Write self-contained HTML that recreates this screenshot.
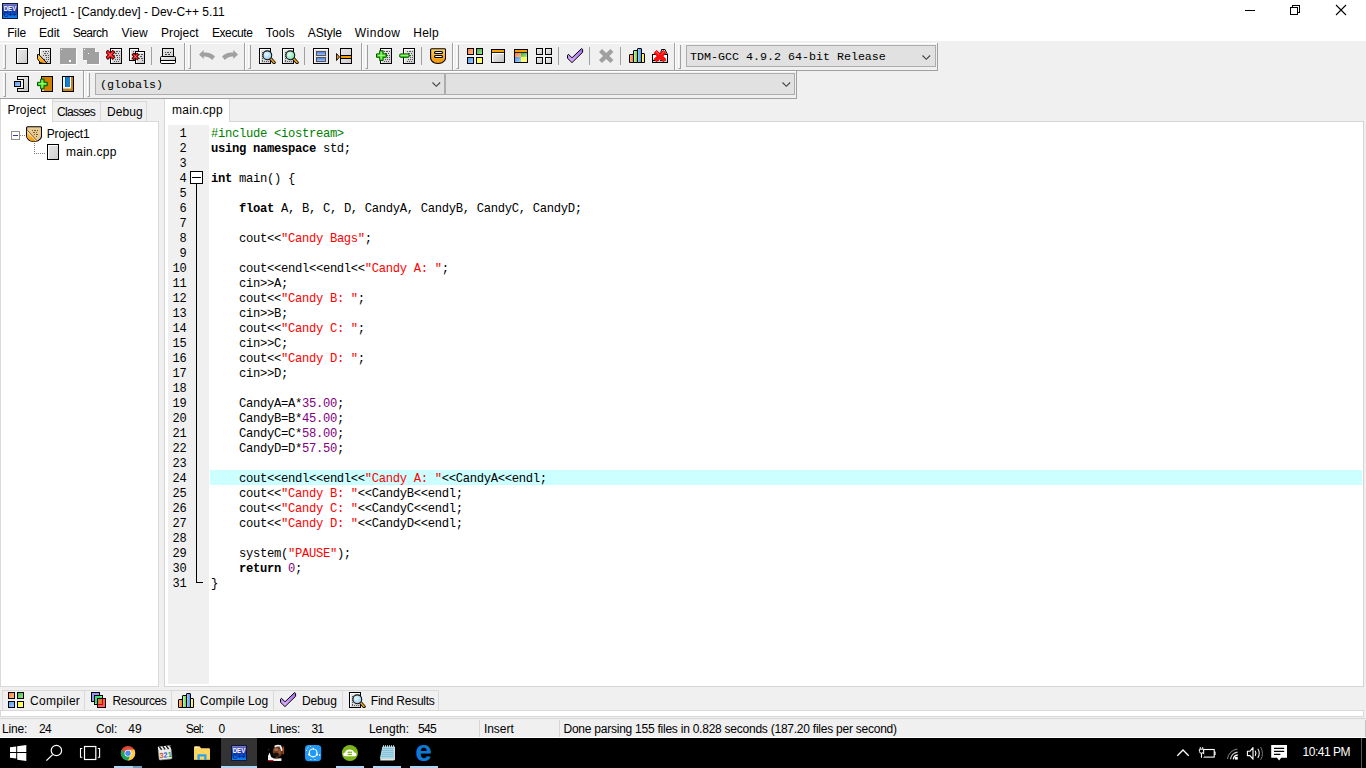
<!DOCTYPE html><html lang="en"><head><meta charset="utf-8"><title>Project1 - [Candy.dev] - Dev-C++ 5.11</title><style>
*{box-sizing:border-box;margin:0;padding:0}
html,body{width:1366px;height:768px;overflow:hidden;background:#f0f0f0}
body{position:relative;font-family:"Liberation Sans", "DejaVu Sans", sans-serif;font-size:12px;color:#000;-webkit-font-smoothing:antialiased}
.abs{position:absolute}
.t{position:absolute;white-space:pre;line-height:16px;height:16px}
#title{left:0;top:0;width:1366px;height:23px;background:#fff}
#menu{left:0;top:23px;width:1366px;height:18px;background:#fff}
.vl{position:absolute;width:1px;background:#a0a0a0}
.vw{position:absolute;width:1px;background:#fff}
.hl{position:absolute;height:1px;background:#a0a0a0}
.hw{position:absolute;height:1px;background:#fff}
.grip{position:absolute;width:3px;height:24px;border-left:1px solid #fcfcfc;border-right:1px solid #a0a0a0;border-bottom:1px solid #a0a0a0}
.sep{position:absolute;width:1px;height:18px;background:#a0a0a0;top:47px}
.combo{position:absolute;background:#e1e1e1;border:1px solid #adadad;font-family:"Liberation Mono", "DejaVu Sans Mono", monospace}
.ic{position:absolute;width:16px;height:16px;overflow:visible}
.tab{position:absolute;background:#f0f0f0;border:1px solid #d9d9d9}
.code{position:absolute;left:211px;white-space:pre;font-family:"Liberation Mono", "DejaVu Sans Mono", monospace;font-size:12.2px;letter-spacing:-0.321px;line-height:15px;height:15px;color:#000}
.ln{position:absolute;left:166px;width:20.5px;text-align:right;white-space:pre;font-family:"Liberation Mono", "DejaVu Sans Mono", monospace;font-size:12px;letter-spacing:-0.2px;line-height:15px;height:15px;color:#000}
.k{font-weight:bold}
.p{color:#008000}
.s{color:#ff0000}
.n{color:#800080}
</style></head><body>
<div id="title" class="abs"></div>
<div class="t" style="left:23.5px;top:4px;letter-spacing:-0.03px;">Project1 - [Candy.dev] - Dev-C++ 5.11</div>
<svg class="abs" style="left:1240px;top:0" width="126" height="23" viewBox="0 0 126 23"><g fill="none" stroke="#000" stroke-width="1" shape-rendering="crispEdges"><path d="M5 10.5h10"/><path d="M50.5 7.5h7v7h-7z"/><path d="M52.5 7.5v-2h7v7h-2"/></g><path d="M96 5l10 10M106 5l-10 10" stroke="#000" stroke-width="1.1" fill="none"/></svg>
<div id="menu" class="abs"></div>
<div class="t" style="left:7.2px;top:25px;letter-spacing:-0.15px;">File</div>
<div class="t" style="left:39.1px;top:25px;letter-spacing:-0.03px;">Edit</div>
<div class="t" style="left:72.7px;top:25px;letter-spacing:-0.51px;">Search</div>
<div class="t" style="left:121.5px;top:25px;letter-spacing:0.10px;">View</div>
<div class="t" style="left:161.1px;top:25px;letter-spacing:0.02px;">Project</div>
<div class="t" style="left:211.9px;top:25px;letter-spacing:-0.39px;">Execute</div>
<div class="t" style="left:265.7px;top:25px;letter-spacing:0.22px;">Tools</div>
<div class="t" style="left:307.8px;top:25px;letter-spacing:-0.10px;">AStyle</div>
<div class="t" style="left:354.8px;top:25px;letter-spacing:0.50px;">Window</div>
<div class="t" style="left:413.3px;top:25px;letter-spacing:0.24px;">Help</div>
<svg width="0" height="0" style="position:absolute"><defs>
<linearGradient id="gPage" x1="0" y1="0" x2="1" y2="1"><stop offset="0" stop-color="#e6e6e6"/><stop offset="0.5" stop-color="#dcdcdc"/><stop offset="1" stop-color="#cccccc"/></linearGradient>
<linearGradient id="gOr" x1="0" y1="0" x2="0" y2="1"><stop offset="0" stop-color="#ffd060"/><stop offset="1" stop-color="#f79000"/></linearGradient>
<linearGradient id="gO2" x1="0" y1="0" x2="1" y2="1"><stop offset="0" stop-color="#ff7a30"/><stop offset="1" stop-color="#ffc090"/></linearGradient>
<linearGradient id="gG2" x1="0" y1="0" x2="1" y2="1"><stop offset="0" stop-color="#38ac38"/><stop offset="1" stop-color="#a8ea9a"/></linearGradient>
<linearGradient id="gB2" x1="0" y1="0" x2="1" y2="1"><stop offset="0" stop-color="#4a98f0"/><stop offset="1" stop-color="#a8d0ff"/></linearGradient>
<linearGradient id="gY2" x1="0" y1="0" x2="1" y2="1"><stop offset="0" stop-color="#ffff30"/><stop offset="1" stop-color="#ffff90"/></linearGradient>
<linearGradient id="gGr" x1="0" y1="0" x2="1" y2="1"><stop offset="0" stop-color="#f6f6f6"/><stop offset="1" stop-color="#c0c0c0"/></linearGradient>
<linearGradient id="cO" x1="0" y1="0" x2="1" y2="0"><stop offset="0" stop-color="#ffc890"/><stop offset="1" stop-color="#f87820"/></linearGradient>
<linearGradient id="cG" x1="0" y1="0" x2="1" y2="0"><stop offset="0" stop-color="#d8ffb8"/><stop offset="1" stop-color="#58c838"/></linearGradient>
<linearGradient id="cB" x1="0" y1="0" x2="1" y2="0"><stop offset="0" stop-color="#a8d4ff"/><stop offset="1" stop-color="#4090f0"/></linearGradient>
<linearGradient id="cY" x1="0" y1="0" x2="1" y2="0"><stop offset="0" stop-color="#ffffb0"/><stop offset="1" stop-color="#f8e820"/></linearGradient>
<linearGradient id="gBar" x1="0" y1="0" x2="0" y2="1"><stop offset="0" stop-color="#3a78e8"/><stop offset="1" stop-color="#a6c8ff"/></linearGradient>
<linearGradient id="gPur" x1="0" y1="0" x2="0" y2="1"><stop offset="0" stop-color="#a060f0"/><stop offset="1" stop-color="#e0b8ff"/></linearGradient>
<radialGradient id="gLensB" cx="0.4" cy="0.4" r="0.7"><stop offset="0" stop-color="#e8f8ff"/><stop offset="1" stop-color="#8cc8f0"/></radialGradient>
<radialGradient id="gLensG" cx="0.4" cy="0.4" r="0.7"><stop offset="0" stop-color="#e0fff0"/><stop offset="1" stop-color="#70d8a8"/></radialGradient>
<linearGradient id="gDev" x1="0" y1="0" x2="0" y2="1"><stop offset="0" stop-color="#a8a8e0"/><stop offset="0.12" stop-color="#6068c0"/><stop offset="0.45" stop-color="#2030a0"/><stop offset="0.6" stop-color="#0848c8"/><stop offset="1" stop-color="#1090ff"/></linearGradient>
</defs></svg>
<svg class="abs" style="left:2px;top:3px" width="16" height="16" viewBox="0 0 16 16"><rect x="0" y="0" width="16" height="16" fill="url(#gDev)"/><rect x="0.5" y="0.5" width="15" height="15" fill="none" stroke="#101840"/><text x="8" y="7.6" font-family="Liberation Sans, sans-serif" font-weight="bold" font-size="7" fill="#fff" text-anchor="middle" textLength="12.6" lengthAdjust="spacingAndGlyphs">DEV</text><text x="8" y="13.6" font-family="Liberation Sans, sans-serif" font-weight="bold" font-size="7" fill="#062c80" text-anchor="middle" textLength="13" lengthAdjust="spacingAndGlyphs">C++</text></svg>
<svg class="abs" style="left:16px;top:48px" width="12" height="16" viewBox="0 0 12 16" ><rect x="0.5" y="0.5" width="11" height="15" fill="url(#gPage)" stroke="#000" shape-rendering="crispEdges"/><path d="M1.5 14.5V1.5H10.5" fill="none" stroke="#fff" shape-rendering="crispEdges"/></svg>
<svg class="abs" style="left:37px;top:48px" width="14" height="16" viewBox="0 0 14 16" ><rect x="2.5" y="0.5" width="11" height="15" fill="url(#gPage)" stroke="#000" shape-rendering="crispEdges"/><path d="M3.5 14.5V1.5H12.5" fill="none" stroke="#fff" shape-rendering="crispEdges"/><rect x="6" y="3" width="1" height="1" fill="#555" shape-rendering="crispEdges"/><rect x="8" y="3" width="2" height="1" fill="#555" shape-rendering="crispEdges"/><rect x="11" y="3" width="1" height="1" fill="#555" shape-rendering="crispEdges"/><rect x="7" y="5" width="2" height="1" fill="#555" shape-rendering="crispEdges"/><rect x="10" y="5" width="1" height="1" fill="#555" shape-rendering="crispEdges"/><rect x="6" y="7" width="1" height="1" fill="#555" shape-rendering="crispEdges"/><rect x="8" y="7" width="2" height="1" fill="#555" shape-rendering="crispEdges"/><rect x="11" y="7" width="1" height="1" fill="#555" shape-rendering="crispEdges"/><rect x="9" y="9" width="1" height="1" fill="#555" shape-rendering="crispEdges"/><rect x="11" y="9" width="1" height="1" fill="#555" shape-rendering="crispEdges"/><rect x="7" y="11" width="1" height="1" fill="#555" shape-rendering="crispEdges"/><rect x="9" y="11" width="1" height="1" fill="#555" shape-rendering="crispEdges"/><rect x="11" y="11" width="1" height="1" fill="#555" shape-rendering="crispEdges"/><rect x="6" y="13" width="1" height="1" fill="#555" shape-rendering="crispEdges"/><rect x="8" y="13" width="1" height="1" fill="#555" shape-rendering="crispEdges"/><rect x="10" y="13" width="1" height="1" fill="#555" shape-rendering="crispEdges"/><path d="M0.5 6.5H1.8L10.5 15.5H6L3.5 14.5L1.5 12.5L0.5 10.5Z" fill="url(#gOr)" stroke="#000" stroke-linejoin="round"/></svg>
<svg class="abs" style="left:60px;top:48px" width="17" height="17" viewBox="0 0 17 17" ><rect x="1" y="1" width="16" height="16" fill="#fff" shape-rendering="crispEdges"/><rect x="0" y="0" width="16" height="16" fill="#a0a0a0" shape-rendering="crispEdges"/><rect x="1" y="1" width="1" height="1" fill="#fff" shape-rendering="crispEdges"/><rect x="9" y="12" width="2" height="2" fill="#fff" shape-rendering="crispEdges"/></svg>
<svg class="abs" style="left:83px;top:48px" width="17" height="17" viewBox="0 0 17 17" ><path d="M1 1h12v4h4v12h-12v-4h-4z" fill="#fff" shape-rendering="crispEdges"/><path d="M0 0h12v4h4v12h-12v-4h-4z" fill="#a0a0a0" shape-rendering="crispEdges"/><rect x="1" y="1" width="1" height="1" fill="#fff" shape-rendering="crispEdges"/><rect x="5" y="5" width="1" height="1" fill="#fff" shape-rendering="crispEdges"/></svg>
<svg class="abs" style="left:106px;top:48px" width="16" height="16" viewBox="0 0 16 16" ><rect x="4.5" y="0.5" width="11" height="15" fill="url(#gPage)" stroke="#000" shape-rendering="crispEdges"/><path d="M5.5 14.5V1.5H14.5" fill="none" stroke="#fff" shape-rendering="crispEdges"/><rect x="8" y="3" width="1" height="1" fill="#555" shape-rendering="crispEdges"/><rect x="10" y="3" width="2" height="1" fill="#555" shape-rendering="crispEdges"/><rect x="13" y="3" width="1" height="1" fill="#555" shape-rendering="crispEdges"/><rect x="9" y="5" width="2" height="1" fill="#555" shape-rendering="crispEdges"/><rect x="12" y="5" width="1" height="1" fill="#555" shape-rendering="crispEdges"/><rect x="8" y="7" width="1" height="1" fill="#555" shape-rendering="crispEdges"/><rect x="10" y="7" width="2" height="1" fill="#555" shape-rendering="crispEdges"/><rect x="13" y="7" width="1" height="1" fill="#555" shape-rendering="crispEdges"/><rect x="11" y="9" width="1" height="1" fill="#555" shape-rendering="crispEdges"/><rect x="13" y="9" width="1" height="1" fill="#555" shape-rendering="crispEdges"/><rect x="9" y="11" width="1" height="1" fill="#555" shape-rendering="crispEdges"/><rect x="11" y="11" width="1" height="1" fill="#555" shape-rendering="crispEdges"/><rect x="13" y="11" width="1" height="1" fill="#555" shape-rendering="crispEdges"/><rect x="8" y="13" width="1" height="1" fill="#555" shape-rendering="crispEdges"/><rect x="10" y="13" width="1" height="1" fill="#555" shape-rendering="crispEdges"/><rect x="12" y="13" width="1" height="1" fill="#555" shape-rendering="crispEdges"/><path d="M1.9 4.4L6.7 9.2M6.7 4.4L1.9 9.2" stroke="#300" stroke-width="3.8" stroke-linecap="square" fill="none"/><path d="M1.9 4.4L6.7 9.2M6.7 4.4L1.9 9.2" stroke="#ff1818" stroke-width="2.2" stroke-linecap="square" fill="none"/><path d="M2.4 4.9L6.2 8.7M6.2 4.9L2.4 8.7" stroke="#ff8080" stroke-width="0.8" fill="none"/></svg>
<svg class="abs" style="left:129px;top:48px" width="16" height="16" viewBox="0 0 16 16" ><rect x="0.5" y="0.5" width="9" height="12" fill="url(#gPage)" stroke="#000" shape-rendering="crispEdges"/><path d="M1.5 11.5V1.5H8.5" fill="none" stroke="#fff" shape-rendering="crispEdges"/><rect x="4" y="3" width="1" height="1" fill="#555" shape-rendering="crispEdges"/><rect x="6" y="3" width="2" height="1" fill="#555" shape-rendering="crispEdges"/><rect x="5" y="5" width="2" height="1" fill="#555" shape-rendering="crispEdges"/><rect x="4" y="7" width="1" height="1" fill="#555" shape-rendering="crispEdges"/><rect x="6" y="7" width="2" height="1" fill="#555" shape-rendering="crispEdges"/><rect x="7" y="9" width="1" height="1" fill="#555" shape-rendering="crispEdges"/><rect x="6.5" y="3.5" width="9" height="12" fill="url(#gPage)" stroke="#000" shape-rendering="crispEdges"/><path d="M7.5 14.5V4.5H14.5" fill="none" stroke="#fff" shape-rendering="crispEdges"/><rect x="10" y="6" width="1" height="1" fill="#555" shape-rendering="crispEdges"/><rect x="12" y="6" width="2" height="1" fill="#555" shape-rendering="crispEdges"/><rect x="11" y="8" width="2" height="1" fill="#555" shape-rendering="crispEdges"/><rect x="10" y="10" width="1" height="1" fill="#555" shape-rendering="crispEdges"/><rect x="12" y="10" width="2" height="1" fill="#555" shape-rendering="crispEdges"/><rect x="13" y="12" width="1" height="1" fill="#555" shape-rendering="crispEdges"/><path d="M4.7 6.8L8.1 10.2M8.1 6.8L4.7 10.2" stroke="#300" stroke-width="3.1" stroke-linecap="square" fill="none"/><path d="M4.7 6.8L8.1 10.2M8.1 6.8L4.7 10.2" stroke="#ff1818" stroke-width="1.5" stroke-linecap="square" fill="none"/><path d="M5.2 7.3L7.6 9.7M7.6 7.3L5.2 9.7" stroke="#ff8080" stroke-width="0.8" fill="none"/></svg>
<svg class="abs" style="left:160px;top:48px" width="16" height="16" viewBox="0 0 16 16" ><rect x="2.5" y="0.5" width="11" height="9" fill="url(#gPage)" stroke="#000" shape-rendering="crispEdges"/><rect x="5" y="4" width="1" height="1" fill="#444"/><rect x="7" y="4" width="2" height="1" fill="#444"/><rect x="10" y="4" width="1" height="1" fill="#444"/><rect x="5" y="6" width="2" height="1" fill="#444"/><rect x="8" y="6" width="2" height="1" fill="#444"/><rect x="0.5" y="8.5" width="15" height="7" rx="1.2" fill="#fff" stroke="#000"/><rect x="1" y="9" width="14" height="3" fill="url(#gGr)"/><rect x="1" y="12" width="14" height="1" fill="#000" shape-rendering="crispEdges"/></svg>
<svg class="abs" style="left:199px;top:50px" width="16" height="10" viewBox="0 0 16 10" ><path d="M0 4.5L4.7 0V2.6C9 2 13 3.5 16 6.6L13.2 10C11 7.5 8 6.3 4.7 6.6V9Z" fill="#a0a0a0"/></svg>
<svg class="abs" style="left:222px;top:50px" width="16" height="10" viewBox="0 0 16 10" ><g transform="translate(16,0) scale(-1,1)"><path d="M0 4.5L4.7 0V2.6C9 2 13 3.5 16 6.6L13.2 10C11 7.5 8 6.3 4.7 6.6V9Z" fill="#a0a0a0"/></g></svg>
<svg class="abs" style="left:259px;top:48px" width="17" height="16" viewBox="0 0 17 16" ><rect x="0.5" y="0.5" width="11" height="15" fill="url(#gPage)" stroke="#000" shape-rendering="crispEdges"/><path d="M1.5 14.5V1.5H10.5" fill="none" stroke="#fff" shape-rendering="crispEdges"/><path d="M3 4v9M3 13h7" stroke="#555" stroke-dasharray="1 1" fill="none" shape-rendering="crispEdges"/><path d="M11.5 10.5L15 14.5" stroke="#000" stroke-width="3.4" stroke-linecap="round"/><path d="M11.5 10.5L15 14.3" stroke="#f0a020" stroke-width="1.7" stroke-linecap="round"/><circle cx="8.3" cy="7.3" r="4.4" fill="url(#gLensB)" stroke="#111" stroke-width="1.1"/></svg>
<svg class="abs" style="left:282px;top:48px" width="17" height="16" viewBox="0 0 17 16" ><rect x="0.5" y="0.5" width="11" height="15" fill="url(#gPage)" stroke="#000" shape-rendering="crispEdges"/><path d="M1.5 14.5V1.5H10.5" fill="none" stroke="#fff" shape-rendering="crispEdges"/><path d="M3 4v9M3 13h7" stroke="#555" stroke-dasharray="1 1" fill="none" shape-rendering="crispEdges"/><path d="M11.5 10.5L15 14.5" stroke="#000" stroke-width="3.4" stroke-linecap="round"/><path d="M11.5 10.5L15 14.3" stroke="#f0a020" stroke-width="1.7" stroke-linecap="round"/><circle cx="8.3" cy="7.3" r="4.4" fill="url(#gLensG)" stroke="#111" stroke-width="1.1"/></svg>
<svg class="abs" style="left:313px;top:48px" width="16" height="16" viewBox="0 0 16 16" ><rect x="0.5" y="0.5" width="15" height="15" fill="#e2e2e2" stroke="#000" shape-rendering="crispEdges"/><path d="M1.5 14.5V1.5H14.5" stroke="#fff" fill="none" shape-rendering="crispEdges"/><rect x="3.5" y="3.5" width="9" height="4" fill="url(#gBar)" stroke="#555" shape-rendering="crispEdges"/><rect x="3.5" y="9.5" width="9" height="4" fill="url(#gBar)" stroke="#555" shape-rendering="crispEdges"/></svg>
<svg class="abs" style="left:336px;top:48px" width="16" height="16" viewBox="0 0 16 16" ><rect x="4.5" y="0.5" width="11" height="15" fill="url(#gPage)" stroke="#000" shape-rendering="crispEdges"/><rect x="5" y="7" width="10" height="4" fill="#000" shape-rendering="crispEdges"/><rect x="5" y="8" width="10" height="2" fill="#f0a000" shape-rendering="crispEdges"/><path d="M0.5 5.5L3.5 9L0.5 12.5Z" fill="#f0a000" stroke="#000" stroke-width="0.9"/></svg>
<svg class="abs" style="left:376px;top:48px" width="16" height="16" viewBox="0 0 16 16" ><rect x="4.5" y="0.5" width="11" height="15" fill="url(#gPage)" stroke="#000" shape-rendering="crispEdges"/><path d="M5.5 14.5V1.5H14.5" fill="none" stroke="#fff" shape-rendering="crispEdges"/><rect x="8" y="3" width="1" height="1" fill="#555" shape-rendering="crispEdges"/><rect x="10" y="3" width="2" height="1" fill="#555" shape-rendering="crispEdges"/><rect x="13" y="3" width="1" height="1" fill="#555" shape-rendering="crispEdges"/><rect x="9" y="5" width="2" height="1" fill="#555" shape-rendering="crispEdges"/><rect x="12" y="5" width="1" height="1" fill="#555" shape-rendering="crispEdges"/><rect x="8" y="7" width="1" height="1" fill="#555" shape-rendering="crispEdges"/><rect x="10" y="7" width="2" height="1" fill="#555" shape-rendering="crispEdges"/><rect x="13" y="7" width="1" height="1" fill="#555" shape-rendering="crispEdges"/><rect x="11" y="9" width="1" height="1" fill="#555" shape-rendering="crispEdges"/><rect x="13" y="9" width="1" height="1" fill="#555" shape-rendering="crispEdges"/><rect x="9" y="11" width="1" height="1" fill="#555" shape-rendering="crispEdges"/><rect x="11" y="11" width="1" height="1" fill="#555" shape-rendering="crispEdges"/><rect x="13" y="11" width="1" height="1" fill="#555" shape-rendering="crispEdges"/><rect x="8" y="13" width="1" height="1" fill="#555" shape-rendering="crispEdges"/><rect x="10" y="13" width="1" height="1" fill="#555" shape-rendering="crispEdges"/><rect x="12" y="13" width="1" height="1" fill="#555" shape-rendering="crispEdges"/><path d="M3.7 2.7H7.1V5.9H10.3V9.3H7.1V12.5H3.7V9.3H0.5V5.9H3.7Z" fill="#38e018" stroke="#0a5000" stroke-width="1" stroke-linejoin="round"/><path d="M5.1 4V11.2M1.8 7.3H9" stroke="#b0ff90" stroke-width="1" fill="none"/></svg>
<svg class="abs" style="left:399px;top:48px" width="16" height="16" viewBox="0 0 16 16" ><rect x="4.5" y="0.5" width="11" height="15" fill="url(#gPage)" stroke="#000" shape-rendering="crispEdges"/><path d="M5.5 14.5V1.5H14.5" fill="none" stroke="#fff" shape-rendering="crispEdges"/><rect x="8" y="3" width="1" height="1" fill="#555" shape-rendering="crispEdges"/><rect x="10" y="3" width="2" height="1" fill="#555" shape-rendering="crispEdges"/><rect x="13" y="3" width="1" height="1" fill="#555" shape-rendering="crispEdges"/><rect x="9" y="5" width="2" height="1" fill="#555" shape-rendering="crispEdges"/><rect x="12" y="5" width="1" height="1" fill="#555" shape-rendering="crispEdges"/><rect x="8" y="7" width="1" height="1" fill="#555" shape-rendering="crispEdges"/><rect x="10" y="7" width="2" height="1" fill="#555" shape-rendering="crispEdges"/><rect x="13" y="7" width="1" height="1" fill="#555" shape-rendering="crispEdges"/><rect x="11" y="9" width="1" height="1" fill="#555" shape-rendering="crispEdges"/><rect x="13" y="9" width="1" height="1" fill="#555" shape-rendering="crispEdges"/><rect x="9" y="11" width="1" height="1" fill="#555" shape-rendering="crispEdges"/><rect x="11" y="11" width="1" height="1" fill="#555" shape-rendering="crispEdges"/><rect x="13" y="11" width="1" height="1" fill="#555" shape-rendering="crispEdges"/><rect x="8" y="13" width="1" height="1" fill="#555" shape-rendering="crispEdges"/><rect x="10" y="13" width="1" height="1" fill="#555" shape-rendering="crispEdges"/><rect x="12" y="13" width="1" height="1" fill="#555" shape-rendering="crispEdges"/><rect x="0.5" y="5.9" width="9.8" height="3.4" rx="1.5" fill="#38e018" stroke="#0a5000"/><path d="M1.8 7.3H9" stroke="#b0ff90" fill="none"/></svg>
<svg class="abs" style="left:430px;top:48px" width="16" height="16" viewBox="0 0 16 16" ><path d="M0.6 1.8Q0.6 0.7 1.8 0.7H14.4Q15.6 0.7 15.6 1.8V9.5Q15.6 13 12 14.7Q8 16.2 4.2 14.7Q0.6 13 0.6 9.5Z" fill="url(#gOr)" stroke="#000" stroke-width="1.1"/><rect x="4" y="3" width="9" height="3" rx="1.5" fill="#000"/><rect x="5.3" y="4" width="6.4" height="1" fill="#fff"/><rect x="4" y="7" width="9" height="3" rx="1.5" fill="#000"/><rect x="5.3" y="8" width="6.4" height="1" fill="#fff"/></svg>
<svg class="abs" style="left:467px;top:48px" width="16" height="16" viewBox="0 0 16 16" ><rect x="0.5" y="0.5" width="6" height="6" fill="url(#gO2)" stroke="#000" shape-rendering="crispEdges"/><rect x="9.5" y="0.5" width="6" height="6" fill="url(#gG2)" stroke="#000" shape-rendering="crispEdges"/><rect x="0.5" y="9.5" width="6" height="6" fill="url(#gB2)" stroke="#000" shape-rendering="crispEdges"/><rect x="9.5" y="9.5" width="6" height="6" fill="url(#gY2)" stroke="#000" shape-rendering="crispEdges"/></svg>
<svg class="abs" style="left:491px;top:49px" width="14" height="14" viewBox="0 0 14 14" ><rect x="0.5" y="0.5" width="13" height="13" fill="url(#gGr)" stroke="#000" shape-rendering="crispEdges"/><rect x="1" y="1" width="12" height="2" fill="#f8a000" shape-rendering="crispEdges"/><rect x="1" y="3" width="12" height="1" fill="#222" shape-rendering="crispEdges"/><path d="M1.5 12.5V4.5H12.5" stroke="#fff" fill="none" shape-rendering="crispEdges"/></svg>
<svg class="abs" style="left:514px;top:49px" width="14" height="14" viewBox="0 0 14 14" ><rect x="0.5" y="0.5" width="13" height="13" fill="#ddd" stroke="#000" shape-rendering="crispEdges"/><rect x="1" y="1" width="12" height="2" fill="#f8a000" shape-rendering="crispEdges"/><rect x="1" y="3" width="12" height="1" fill="#222" shape-rendering="crispEdges"/><rect x="1" y="4" width="6" height="4" fill="url(#gO2)"/><rect x="7" y="4" width="6" height="4" fill="url(#gG2)"/><rect x="1" y="8" width="6" height="5" fill="url(#gB2)"/><rect x="7" y="8" width="6" height="5" fill="url(#gY2)"/></svg>
<svg class="abs" style="left:536px;top:48px" width="16" height="16" viewBox="0 0 16 16" ><rect x="0.5" y="0.5" width="6" height="6" fill="url(#gGr)" stroke="#000" shape-rendering="crispEdges"/><rect x="9.5" y="0.5" width="6" height="6" fill="url(#gGr)" stroke="#000" shape-rendering="crispEdges"/><rect x="0.5" y="9.5" width="6" height="6" fill="url(#gGr)" stroke="#000" shape-rendering="crispEdges"/><rect x="9.5" y="9.5" width="6" height="6" fill="url(#gGr)" stroke="#000" shape-rendering="crispEdges"/></svg>
<svg class="abs" style="left:567px;top:48px" width="17" height="16" viewBox="0 0 17 16" ><path d="M0.5 7.2L1.5 6.3L5 9.8L14.6 0.5L15.6 1.4V4.3L5 14.6L0.5 10.3Z" fill="url(#gPur)" stroke="#000" stroke-width="1" stroke-linejoin="round"/></svg>
<svg class="abs" style="left:599px;top:49px" width="15" height="14" viewBox="0 0 15 14" ><path d="M3 0L7.2 4L11.4 0L14.4 3L10.4 7L14.4 11L11.4 14L7.2 10L3 14L0 11L4 7L0 3Z" fill="#a0a0a0"/></svg>
<svg class="abs" style="left:629px;top:48px" width="16" height="15" viewBox="0 0 16 15" ><path d="M0.5 14.5V7Q0.5 6.5 1 6.5H4.5V14.5Z" fill="url(#cO)" stroke="#000"/><path d="M4.5 14.5V3Q4.5 2.5 5 2.5H8.5V14.5Z" fill="url(#cG)" stroke="#000"/><path d="M8.5 14.5V1Q8.5 0.5 9 0.5H12Q12.5 0.5 12.5 1V14.5Z" fill="url(#cB)" stroke="#000"/><path d="M12.5 5.5H15Q15.5 5.5 15.5 6V14.5H12.5Z" fill="url(#cY)" stroke="#000"/></svg>
<svg class="abs" style="left:652px;top:48px" width="16" height="16" viewBox="0 0 16 16" ><path d="M8.5 6.5L9.5 1.5H13L15.5 6.5" fill="#e8e8e8" stroke="#000" stroke-linejoin="round"/><rect x="0.5" y="6.5" width="15" height="8" fill="#d0d0d0" stroke="#000" shape-rendering="crispEdges"/><rect x="1" y="7" width="3" height="4" fill="#f8f8f8"/><rect x="12" y="7" width="3" height="5" fill="#fff"/><path d="M1 12.5h14" stroke="#000" stroke-dasharray="2 1.5" fill="none"/><path d="M3.2 3.6L12.8 12.6M12.8 3.6L3.2 12.6" stroke="#e00000" stroke-width="4.2" stroke-linecap="butt" fill="none"/><path d="M3.2 3.6L12.8 12.6M12.8 3.6L3.2 12.6" stroke="#ff1010" stroke-width="3" stroke-linecap="butt" fill="none"/><path d="M4 3.6L7 6.4M12 3.6L9.5 6" stroke="#ff7070" stroke-width="1" fill="none"/></svg>
<svg class="abs" style="left:14px;top:76px" width="16" height="16" viewBox="0 0 16 16" ><path d="M3.5 0.5H14.5V15.5H3.5V12.5H9.5V3.5H3.5Z" fill="url(#gGr)" stroke="#000" shape-rendering="crispEdges"/><rect x="0.5" y="5.5" width="6" height="5" fill="url(#gB2)" stroke="#000" shape-rendering="crispEdges"/></svg>
<svg class="abs" style="left:37px;top:76px" width="16" height="16" viewBox="0 0 16 16" ><rect x="4.5" y="0.5" width="11" height="15" fill="#d08000" stroke="#000" shape-rendering="crispEdges"/><rect x="5" y="13" width="2" height="2" fill="#e8d8b0" shape-rendering="crispEdges"/><path d="M3.7 3.1H7.1V6.3H10.3V9.7H7.1V12.9H3.7V9.7H0.5V6.3H3.7Z" fill="#38e018" stroke="#0a5000" stroke-width="1" stroke-linejoin="round"/><path d="M5.1 4.4V11.6M1.8 7.7H9" stroke="#b0ff90" stroke-width="1" fill="none"/></svg>
<svg class="abs" style="left:62px;top:76px" width="12" height="16" viewBox="0 0 12 16" ><rect x="0.5" y="0.5" width="11" height="15" fill="#d08000" stroke="#000" shape-rendering="crispEdges"/><rect x="1" y="1" width="8" height="12" fill="#f4f4f4" shape-rendering="crispEdges"/><rect x="1" y="12" width="8" height="1" fill="#c8c8c8" shape-rendering="crispEdges"/><rect x="3" y="1" width="5" height="10" fill="#1480d0" shape-rendering="crispEdges"/><rect x="3" y="1" width="1" height="10" fill="#0a60a8" shape-rendering="crispEdges"/></svg>
<div class="hl" style="left:0;top:70px;width:938px"></div><div class="hw" style="left:0;top:71px;width:797px"></div>
<div class="hw" style="left:0;top:43px;width:938px"></div>
<div class="hl" style="left:0;top:98px;width:797px"></div>
<div class="vl" style="left:184px;top:43px;height:27px"></div><div class="vw" style="left:185px;top:43px;height:27px"></div>
<div class="vl" style="left:244px;top:43px;height:27px"></div><div class="vw" style="left:245px;top:43px;height:27px"></div>
<div class="vl" style="left:361px;top:43px;height:27px"></div><div class="vw" style="left:362px;top:43px;height:27px"></div>
<div class="vl" style="left:452px;top:43px;height:27px"></div><div class="vw" style="left:453px;top:43px;height:27px"></div>
<div class="vl" style="left:674px;top:43px;height:27px"></div><div class="vw" style="left:675px;top:43px;height:27px"></div>
<div class="vl" style="left:937px;top:43px;height:27px"></div>
<div class="vl" style="left:83px;top:71px;height:28px"></div><div class="vw" style="left:84px;top:72px;height:26px"></div>
<div class="vl" style="left:796px;top:71px;height:28px"></div>
<div class="grip" style="left:3px;top:45px"></div>
<div class="grip" style="left:188px;top:45px"></div>
<div class="grip" style="left:248px;top:45px"></div>
<div class="grip" style="left:365px;top:45px"></div>
<div class="grip" style="left:456px;top:45px"></div>
<div class="grip" style="left:678px;top:45px"></div>
<div class="grip" style="left:3px;top:73px"></div>
<div class="grip" style="left:87px;top:73px"></div>
<div class="sep" style="left:151px"></div>
<div class="sep" style="left:304px"></div>
<div class="sep" style="left:421px"></div>
<div class="sep" style="left:558px"></div>
<div class="sep" style="left:589px"></div>
<div class="sep" style="left:620px"></div>
<div class="combo" style="left:686px;top:45px;width:250px;height:22px"><div class="t" style="left:3px;top:3px;font-size:11.67px">TDM-GCC 4.9.2 64-bit Release</div><svg class="abs" style="right:3.6px;top:8.5px" width="9" height="6" viewBox="0 0 9 6"><path d="M0.5 0.5l3.8 3.8l3.8-3.8" fill="none" stroke="#404040" stroke-width="1.1"/></svg></div>
<div class="combo" style="left:95px;top:73px;width:350px;height:22px"><div class="t" style="left:4px;top:3px;font-size:11.67px">(globals)</div><svg class="abs" style="right:2.6px;top:8.1px" width="9" height="6" viewBox="0 0 9 6"><path d="M0.5 0.5l3.8 3.8l3.8-3.8" fill="none" stroke="#404040" stroke-width="1.1"/></svg></div>
<div class="combo" style="left:445px;top:73px;width:350px;height:22px"><svg class="abs" style="right:2.6px;top:8.1px" width="9" height="6" viewBox="0 0 9 6"><path d="M0.5 0.5l3.8 3.8l3.8-3.8" fill="none" stroke="#404040" stroke-width="1.1"/></svg></div>
<div class="abs" style="left:0;top:121px;width:159px;height:566px;background:#fff;border:1px solid #d9d9d9"></div>
<div class="abs" style="left:0;top:99px;width:53px;height:23px;background:#fff;border:1px solid #d9d9d9;border-bottom:none;border-top:none"></div>
<div class="tab" style="left:52px;top:101px;width:49px;height:21px"></div>
<div class="tab" style="left:100px;top:101px;width:47px;height:21px"></div>
<div class="t" style="left:7.6px;top:102px;letter-spacing:0.14px;">Project</div>
<div class="t" style="left:57.0px;top:104px;letter-spacing:-0.65px;">Classes</div>
<div class="t" style="left:107.0px;top:104px;letter-spacing:0.08px;">Debug</div>
<div class="t" style="left:46.8px;top:126px;letter-spacing:-0.18px;">Project1</div>
<div class="t" style="left:66.0px;top:144px;letter-spacing:0.24px;">main.cpp</div>
<div class="abs" style="left:164px;top:121px;width:1200px;height:566px;background:#fff;border:1px solid #d4d4d4"></div>
<div class="abs" style="left:164px;top:99px;width:66px;height:23px;background:#fff;border:1px solid #d9d9d9;border-bottom:none;border-top:none"></div>
<div class="t" style="left:172.0px;top:102px;letter-spacing:0.29px;">main.cpp</div>
<div class="abs" style="left:168px;top:125px;width:41px;height:559px;background:#f0f0f0"></div>
<div class="abs" style="left:210px;top:470px;width:1152px;height:15px;background:#ccffff"></div>
<div class="abs" style="left:190px;top:171px;width:13px;height:13px;border:1px solid #000;background:#fff"></div>
<div class="abs" style="left:192px;top:177px;width:9px;height:1px;background:#000"></div>
<div class="abs" style="left:196px;top:184px;width:1px;height:399px;background:#000"></div>
<div class="abs" style="left:196px;top:582px;width:7px;height:1px;background:#000"></div>
<div class="ln" style="top:127px">1</div>
<div class="code" style="top:127px"><span class="p">#include &lt;iostream&gt;</span></div>
<div class="ln" style="top:142px">2</div>
<div class="code" style="top:142px"><span class="k">using namespace</span> std;</div>
<div class="ln" style="top:157px">3</div>
<div class="ln" style="top:172px">4</div>
<div class="code" style="top:172px"><span class="k">int</span> main() {</div>
<div class="ln" style="top:187px">5</div>
<div class="ln" style="top:202px">6</div>
<div class="code" style="top:202px">    <span class="k">float</span> A, B, C, D, CandyA, CandyB, CandyC, CandyD;</div>
<div class="ln" style="top:217px">7</div>
<div class="ln" style="top:232px">8</div>
<div class="code" style="top:232px">    cout&lt;&lt;<span class="s">"Candy Bags"</span>;</div>
<div class="ln" style="top:247px">9</div>
<div class="ln" style="top:262px">10</div>
<div class="code" style="top:262px">    cout&lt;&lt;endl&lt;&lt;endl&lt;&lt;<span class="s">"Candy A: "</span>;</div>
<div class="ln" style="top:277px">11</div>
<div class="code" style="top:277px">    cin&gt;&gt;A;</div>
<div class="ln" style="top:292px">12</div>
<div class="code" style="top:292px">    cout&lt;&lt;<span class="s">"Candy B: "</span>;</div>
<div class="ln" style="top:307px">13</div>
<div class="code" style="top:307px">    cin&gt;&gt;B;</div>
<div class="ln" style="top:322px">14</div>
<div class="code" style="top:322px">    cout&lt;&lt;<span class="s">"Candy C: "</span>;</div>
<div class="ln" style="top:337px">15</div>
<div class="code" style="top:337px">    cin&gt;&gt;C;</div>
<div class="ln" style="top:352px">16</div>
<div class="code" style="top:352px">    cout&lt;&lt;<span class="s">"Candy D: "</span>;</div>
<div class="ln" style="top:367px">17</div>
<div class="code" style="top:367px">    cin&gt;&gt;D;</div>
<div class="ln" style="top:382px">18</div>
<div class="ln" style="top:397px">19</div>
<div class="code" style="top:397px">    CandyA=A*<span class="n">35.00</span>;</div>
<div class="ln" style="top:412px">20</div>
<div class="code" style="top:412px">    CandyB=B*<span class="n">45.00</span>;</div>
<div class="ln" style="top:427px">21</div>
<div class="code" style="top:427px">    CandyC=C*<span class="n">58.00</span>;</div>
<div class="ln" style="top:442px">22</div>
<div class="code" style="top:442px">    CandyD=D*<span class="n">57.50</span>;</div>
<div class="ln" style="top:457px">23</div>
<div class="ln" style="top:472px">24</div>
<div class="code" style="top:472px">    cout&lt;&lt;endl&lt;&lt;endl&lt;&lt;<span class="s">"Candy A: "</span>&lt;&lt;CandyA&lt;&lt;endl;</div>
<div class="ln" style="top:487px">25</div>
<div class="code" style="top:487px">    cout&lt;&lt;<span class="s">"Candy B: "</span>&lt;&lt;CandyB&lt;&lt;endl;</div>
<div class="ln" style="top:502px">26</div>
<div class="code" style="top:502px">    cout&lt;&lt;<span class="s">"Candy C: "</span>&lt;&lt;CandyC&lt;&lt;endl;</div>
<div class="ln" style="top:517px">27</div>
<div class="code" style="top:517px">    cout&lt;&lt;<span class="s">"Candy D: "</span>&lt;&lt;CandyD&lt;&lt;endl;</div>
<div class="ln" style="top:532px">28</div>
<div class="ln" style="top:547px">29</div>
<div class="code" style="top:547px">    system(<span class="s">"PAUSE"</span>);</div>
<div class="ln" style="top:562px">30</div>
<div class="code" style="top:562px">    <span class="k">return</span> <span class="n">0</span>;</div>
<div class="ln" style="top:577px">31</div>
<div class="code" style="top:577px">}</div>
<div class="tab" style="left:2px;top:690px;width:83px;height:21px"></div>
<div class="t" style="left:30.1px;top:693px;letter-spacing:0.24px;">Compiler</div>
<div class="tab" style="left:84px;top:690px;width:89px;height:21px"></div>
<div class="t" style="left:112.6px;top:693px;letter-spacing:-0.39px;">Resources</div>
<div class="tab" style="left:171px;top:690px;width:104px;height:21px"></div>
<div class="t" style="left:200.1px;top:693px;letter-spacing:0.08px;">Compile Log</div>
<div class="tab" style="left:273px;top:690px;width:71px;height:21px"></div>
<div class="t" style="left:302.0px;top:693px;letter-spacing:-0.14px;">Debug</div>
<div class="tab" style="left:342px;top:690px;width:97px;height:21px"></div>
<div class="t" style="left:370.8px;top:693px;letter-spacing:-0.24px;">Find Results</div>
<div class="abs" style="left:0;top:710px;width:1364px;height:7px;background:#fff;border:1px solid #d9d9d9"></div>
<div class="hl" style="left:0;top:718px;width:1366px;background:#d7d7d7"></div>
<div class="t" style="left:2.0px;top:721px;letter-spacing:-0.18px;">Line:</div>
<div class="t" style="left:38.9px;top:721px;letter-spacing:-0.46px;">24</div>
<div class="t" style="left:96.0px;top:721px;letter-spacing:-0.01px;">Col:</div>
<div class="t" style="left:128.2px;top:721px;letter-spacing:0.19px;">49</div>
<div class="t" style="left:185.8px;top:721px;letter-spacing:-0.80px;">Sel:</div>
<div class="t" style="left:218.5px;top:721px;letter-spacing:0.00px;">0</div>
<div class="t" style="left:269.8px;top:721px;letter-spacing:-0.32px;">Lines:</div>
<div class="t" style="left:311.4px;top:721px;letter-spacing:-0.80px;">31</div>
<div class="t" style="left:368.9px;top:721px;letter-spacing:0.04px;">Length:</div>
<div class="t" style="left:418.0px;top:721px;letter-spacing:-0.62px;">545</div>
<div class="t" style="left:483.9px;top:721px;letter-spacing:-0.02px;">Insert</div>
<div class="t" style="left:563.5px;top:721px;letter-spacing:-0.24px;">Done parsing 155 files in 0.828 seconds (187.20 files per second)</div>
<div class="vl" style="left:479px;top:720px;height:17px;background:#d7d7d7"></div>
<div class="vl" style="left:559px;top:720px;height:17px;background:#d7d7d7"></div>
<div class="hw" style="left:0;top:737px;width:1366px"></div><div class="abs" style="left:1365px;top:720px;width:1px;height:17px;background:#c4c4c4"></div>
<div class="abs" style="left:0;top:738px;width:1366px;height:30px;background:#000"></div>
<div class="abs" style="left:221px;top:738px;width:36px;height:28px;background:#333"></div>
<div class="abs" style="left:221px;top:766px;width:36px;height:2px;background:#a8d8f8"></div>
<div class="abs" style="left:114px;top:766px;width:28px;height:2px;background:#a8d8f8"></div>
<div class="abs" style="left:336px;top:766px;width:28px;height:2px;background:#a8d8f8"></div>
<div class="abs" style="left:373px;top:766px;width:28px;height:2px;background:#a8d8f8"></div>
<div class="abs" style="left:410px;top:766px;width:28px;height:2px;background:#a8d8f8"></div>
<div class="abs" style="left:133px;top:766px;width:9px;height:2px;background:#6f9cb8"></div>
<div class="t" style="left:1302.5px;top:744px;letter-spacing:-0.48px;color:#fff">10:41 PM</div>
<div class="vl" style="left:1361px;top:738px;height:30px;background:#555"></div>
<div class="abs" style="left:11px;top:131px;width:9px;height:9px;border:1px solid #919191;background:#fff"></div><div class="abs" style="left:13px;top:135px;width:5px;height:1px;background:#3a3a9a"></div>
<div class="abs" style="left:20px;top:135px;width:6px;height:1px;background:repeating-linear-gradient(90deg,#808080 0 1px,transparent 1px 2px)"></div>
<div class="abs" style="left:34px;top:143px;width:1px;height:11px;background:repeating-linear-gradient(180deg,#808080 0 1px,transparent 1px 2px)"></div>
<div class="abs" style="left:34px;top:153px;width:12px;height:1px;background:repeating-linear-gradient(90deg,#808080 0 1px,transparent 1px 2px)"></div>
<svg class="abs" style="left:26px;top:126px" width="16" height="16" viewBox="0 0 16 16" ><path d="M0.6 1.8Q0.6 0.7 1.8 0.7H14.4Q15.6 0.7 15.6 1.8V9.5Q15.6 13 12 14.7Q8 16.2 4.2 14.7Q0.6 13 0.6 9.5Z" fill="#e8cc98" stroke="#000" stroke-width="1.1"/><path d="M1.1 5L11 15Q8 16 4.4 14.4Q1.1 13 1.1 9.5Z" fill="url(#gOr)"/><path d="M1.2 5.4L10.2 15" stroke="#fff" stroke-width="0.9"/><path d="M1.6 4.6L11 14.6" stroke="#7a4a10" stroke-width="0.9"/><path d="M6 4h1M8 4h2M11 4h1M7 6h2M10 6h1M8 8h1M10 8h2M10 10h1" stroke="#7a5a20" fill="none" shape-rendering="crispEdges"/></svg>
<svg class="abs" style="left:47px;top:144px" width="12" height="16" viewBox="0 0 12 16" ><rect x="0.5" y="0.5" width="11" height="15" fill="url(#gPage)" stroke="#000" shape-rendering="crispEdges"/><path d="M1.5 14.5V1.5H10.5" fill="none" stroke="#fff" shape-rendering="crispEdges"/></svg>
<svg class="abs" style="left:8px;top:692px" width="16" height="16" viewBox="0 0 16 16" ><rect x="0.5" y="0.5" width="6" height="6" fill="url(#gO2)" stroke="#000" shape-rendering="crispEdges"/><rect x="9.5" y="0.5" width="6" height="6" fill="url(#gG2)" stroke="#000" shape-rendering="crispEdges"/><rect x="0.5" y="9.5" width="6" height="6" fill="url(#gB2)" stroke="#000" shape-rendering="crispEdges"/><rect x="9.5" y="9.5" width="6" height="6" fill="url(#gY2)" stroke="#000" shape-rendering="crispEdges"/></svg>
<svg class="abs" style="left:91px;top:692px" width="16" height="17" viewBox="0 0 16 17" ><rect x="0.5" y="0.5" width="8" height="9" fill="#9494fa" stroke="#000" shape-rendering="crispEdges"/><rect x="3.5" y="3.5" width="8" height="9" fill="#38dc78" stroke="#000" shape-rendering="crispEdges"/><rect x="4" y="11" width="1" height="1" fill="#90ff90"/><rect x="9" y="4" width="2" height="1" fill="#90ff90"/><rect x="6.5" y="6.5" width="8" height="9" fill="#ff5c5c" stroke="#000" shape-rendering="crispEdges"/><rect x="7" y="7" width="4" height="5" fill="#e07430" shape-rendering="crispEdges"/><path d="M7 12.5H11.5V7" stroke="#c00000" fill="none" shape-rendering="crispEdges"/></svg>
<svg class="abs" style="left:178px;top:693px" width="16" height="15" viewBox="0 0 16 15" ><path d="M0.5 14.5V7Q0.5 6.5 1 6.5H4.5V14.5Z" fill="url(#cO)" stroke="#000"/><path d="M4.5 14.5V3Q4.5 2.5 5 2.5H8.5V14.5Z" fill="url(#cG)" stroke="#000"/><path d="M8.5 14.5V1Q8.5 0.5 9 0.5H12Q12.5 0.5 12.5 1V14.5Z" fill="url(#cB)" stroke="#000"/><path d="M12.5 5.5H15Q15.5 5.5 15.5 6V14.5H12.5Z" fill="url(#cY)" stroke="#000"/></svg>
<svg class="abs" style="left:280px;top:692px" width="17" height="16" viewBox="0 0 17 16" ><path d="M0.5 7.2L1.5 6.3L5 9.8L14.6 0.5L15.6 1.4V4.3L5 14.6L0.5 10.3Z" fill="url(#gPur)" stroke="#000" stroke-width="1" stroke-linejoin="round"/></svg>
<svg class="abs" style="left:349px;top:692px" width="17" height="16" viewBox="0 0 17 16" ><rect x="0.5" y="0.5" width="11" height="15" fill="url(#gPage)" stroke="#000" shape-rendering="crispEdges"/><path d="M1.5 14.5V1.5H10.5" fill="none" stroke="#fff" shape-rendering="crispEdges"/><path d="M3 4v9M3 13h7" stroke="#555" stroke-dasharray="1 1" fill="none" shape-rendering="crispEdges"/><path d="M11.5 10.5L15 14.5" stroke="#000" stroke-width="3.4" stroke-linecap="round"/><path d="M11.5 10.5L15 14.3" stroke="#f0a020" stroke-width="1.7" stroke-linecap="round"/><circle cx="8.3" cy="7.3" r="4.4" fill="url(#gLensB)" stroke="#111" stroke-width="1.1"/></svg>
<svg class="abs" style="left:0;top:738px" width="1366" height="30" viewBox="0 0 1366 30"><path d="M10 9.3L16.2 8.4V13.9H10ZM17.2 8.3L26.3 7V13.9H17.2ZM10 15.1H16.2V20.6L10 19.7ZM17.2 15.1H26.3V23L17.2 21.7Z" fill="#fff"/><circle cx="56.4" cy="12.5" r="5.2" fill="none" stroke="#fff" stroke-width="1.2"/><path d="M52.6 16.6L46.4 22.6" stroke="#fff" stroke-width="1.3"/><rect x="84.5" y="8.5" width="11.3" height="13" fill="none" stroke="#fff" stroke-width="1.2"/><path d="M82.3 10.5H80.5V19.3H82.3M97.8 10.5H99.6V19.3H97.8" fill="none" stroke="#fff" stroke-width="1.1"/><circle cx="128" cy="15.2" r="7.2" fill="#e04a3a"/><path d="M128 15.2L128 22.4A7.2 7.2 0 0 1 121.765 11.6Z" fill="#1ea35c"/><path d="M128 15.2L134.235 11.6A7.2 7.2 0 0 1 128 22.4Z" fill="#fcd040"/><path d="M128 15.2L121.765 11.6L126.5 18Z" fill="#e04a3a"/><path d="M128 15.2L128 22.4L131.2 15.4Z" fill="#1ea35c"/><path d="M128 15.2L134.235 11.6L126.4 12.1Z" fill="#fcd040"/><circle cx="128" cy="15.2" r="3.5" fill="#f4f4f4"/><circle cx="128" cy="15.2" r="2.7" fill="#4a8cf5"/><g transform="translate(158,7) rotate(-6 7 8)"><rect x="0.5" y="4" width="13" height="10.5" rx="1" fill="#ececec" stroke="#888" stroke-width="0.6"/><rect x="0.5" y="1" width="13" height="3.4" fill="#f4f4f4"/><path d="M2 1l2 3.4M5.5 1l2 3.4M9 1l2 3.4M12.5 1l1 2" stroke="#222" stroke-width="1.4"/><text x="1.2" y="12.6" font-family="Liberation Sans, sans-serif" font-weight="bold" font-size="7.5"><tspan fill="#d05020">3</tspan><tspan fill="#3070d0">2</tspan><tspan fill="#30a040">1</tspan></text></g><path d="M194 9.5Q194 8.3 195.2 8.3H199.5L201.2 10.2H209Q210 10.2 210 11.2V21.5H194Z" fill="#ffd970"/><rect x="194" y="11.4" width="16" height="10.3" fill="#fbd661"/><path d="M197.5 22V16.2H206.5V22H204.2V18.6H199.8V22Z" fill="#29a4f0"/><rect x="195" y="8.9" width="3" height="1" fill="#fff8d8"/><ellipse cx="277.6" cy="13.4" rx="4.9" ry="5.5" fill="#6a3a22"/><ellipse cx="276.2" cy="11.6" rx="2.2" ry="1.6" fill="#a8684a"/><ellipse cx="279.4" cy="13.8" rx="1.6" ry="2.2" fill="#8a5030"/><rect x="282.5" y="8.6" width="1.6" height="7.6" fill="#a04c14"/><path d="M274.6 8.8Q277.5 6.8 280.4 8L282 12.6" fill="none" stroke="#f0f0f0" stroke-width="1.7"/><ellipse cx="275.8" cy="16.8" rx="3" ry="2" fill="#1c0e0a"/><path d="M268 23V18L269.6 14.6L271.2 19L274 20.4L281.4 20.2V23Z" fill="#f4f0f0"/><path d="M274.5 20.5L277 18.5L279 20.4Z" fill="#6a3a24"/><rect x="268" y="22" width="5.4" height="1.2" fill="#c01424"/><rect x="268.2" y="11.2" width="1" height="1" fill="#555"/><rect x="305" y="6.9" width="16.2" height="16.3" rx="3.6" fill="#2098f4"/><circle cx="313.1" cy="14.9" r="3.9" fill="none" stroke="#fff" stroke-width="1.2"/><rect x="311.9" y="9.6" width="2.4" height="3" fill="#2098f4"/><rect x="312.5" y="9.8" width="1.3" height="2.2" fill="#fff"/><circle cx="309.2" cy="16.6" r="1.1" fill="#fff"/><circle cx="317" cy="16.6" r="1.1" fill="#fff"/><rect x="306.2" y="11.8" width="1" height="1" fill="#fff"/><path d="M307.2 10.4l1.4-1.4" stroke="#e8f4ff" stroke-width="0.9"/><rect x="310" y="8" width="0.9" height="0.9" fill="#cfe8ff"/><rect x="319.2" y="16.2" width="1" height="1.8" fill="#fff"/><path d="M310 21.6h1.6M313.8 21.6h2" stroke="#bfe0ff" stroke-width="0.8"/><circle cx="349.9" cy="15" r="8.1" fill="#7db41a"/><path d="M345 18.2Q343.2 18.2 343.2 16.3Q343.2 14.6 345.2 14.4Q345.6 11.4 349.6 11.4Q353.2 11.4 354 14.2Q356.6 14.4 356.6 16.4Q356.6 18.2 354.6 18.2Z" fill="#fff"/><rect x="347.6" y="13.6" width="4.4" height="1.3" fill="#7db41a"/><rect x="347.6" y="15.8" width="4.4" height="1.3" fill="#7db41a"/><path d="M382.6 8.8H395V21.6L393.8 22.6H380.2Z" fill="#e8e4d8"/><path d="M382.4 8.8H394.2V20.8H379.8Z" fill="#a8d8e8"/><path d="M382.8 10.5H393.6M382.5 12.5H393.6M382.2 14.5H393.6M381.8 16.5H393.6M381.4 18.5H393.6" stroke="#78b8d0" stroke-width="0.7"/><path d="M383.5 7.2V9.2M385.5 7.2V9.2M387.5 7.2V9.2M389.5 7.2V9.2M391.5 7.2V9.2M393.5 7.2V9.2" stroke="#d8e8f0" stroke-width="0.9"/><path d="M1177.3 17.8L1183 12L1188.7 17.8" fill="none" stroke="#fff" stroke-width="1.3"/><rect x="1203.6" y="11.5" width="10.6" height="7.6" fill="none" stroke="#fff" stroke-width="1.1"/><rect x="1214.4" y="13.6" width="1.2" height="3.4" fill="#fff"/><path d="M1200.3 9V11.2M1202.7 9V11.2" stroke="#fff" stroke-width="0.9"/><path d="M1199.4 11.2H1203.6V13.4Q1203.6 15.2 1201.5 15.2Q1199.4 15.2 1199.4 13.4Z" fill="#000" stroke="#fff" stroke-width="1"/><path d="M1201.5 15.2V19.6" stroke="#fff" stroke-width="1.1"/><rect x="1201.6" y="16" width="2.6" height="3.4" fill="#000"/><path d="M1201.5 15.2V19.6" stroke="#fff" stroke-width="1.1"/><path d="M1227.47 21.04A11.2 11.2 0 0 1 1237.44 11.072" fill="none" stroke="#8a8a8a" stroke-width="1"/><path d="M1230.48 21.2A8 8 0 0 1 1237.6 14.08" fill="none" stroke="#d0d0d0" stroke-width="1.2"/><path d="M1233.39 21.355A4.9 4.9 0 0 1 1237.76 16.994" fill="none" stroke="#fff" stroke-width="1.4"/><rect x="1235" y="18.8" width="2.8" height="2.8" fill="#fff"/><path d="M1247.4 13.2H1250L1253 9.6V21.2L1250 17.6H1247.4Z" fill="none" stroke="#fff" stroke-width="1.1" stroke-linejoin="round"/><path d="M1255.2 12.8Q1256.8 15.4 1255.2 18" fill="none" stroke="#fff" stroke-width="1.1"/><path d="M1257.8 10.8Q1260.8 15.4 1257.8 20" fill="none" stroke="#e0e0e0" stroke-width="1.1"/><path d="M1260.6 9Q1264.4 15.4 1260.6 21.8" fill="none" stroke="#777" stroke-width="1"/><path d="M1271.2 7H1287V19.8H1281.2L1279.1 22.6L1277 19.8H1271.2Z" fill="#fff"/><path d="M1274 10.4H1284.2M1274 13.4H1284.2M1274 16.4H1280.4" stroke="#000" stroke-width="1.2"/></svg>
<svg class="abs" style="left:231px;top:745px" width="16" height="16" viewBox="0 0 16 16"><rect x="0" y="0" width="16" height="16" fill="url(#gDev)"/><rect x="0.5" y="0.5" width="15" height="15" fill="none" stroke="#101840"/><text x="8" y="7.6" font-family="Liberation Sans, sans-serif" font-weight="bold" font-size="7" fill="#fff" text-anchor="middle" textLength="12.6" lengthAdjust="spacingAndGlyphs">DEV</text><text x="8" y="13.6" font-family="Liberation Sans, sans-serif" font-weight="bold" font-size="7" fill="#062c80" text-anchor="middle" textLength="13" lengthAdjust="spacingAndGlyphs">C++</text></svg>
<div class="abs" style="left:411.5px;top:736px;width:24px;height:30px;line-height:30px;text-align:center;font-family:'Liberation Sans',sans-serif;font-weight:bold;font-size:30px;color:#0c7bd8">e</div>
</body></html>
